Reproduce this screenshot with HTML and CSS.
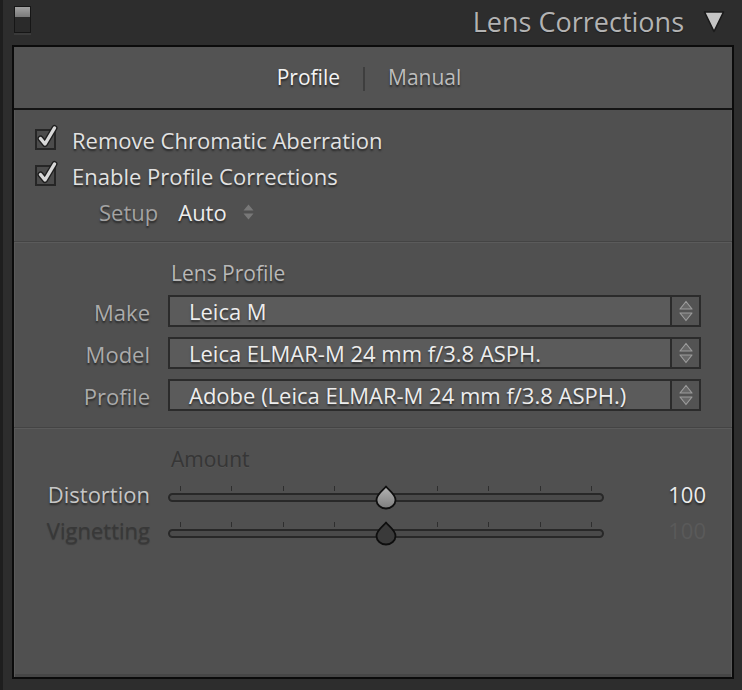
FILE: index.html
```html
<!DOCTYPE html>
<html>
<head>
<meta charset="utf-8">
<link rel="stylesheet" href="styles.css">
</head>
<body>
<div class="app">
  <header class="hdr">
    <div class="switch"><span class="sw-top"></span></div>
    <div class="title">Lens Corrections</div>
    <svg class="tri" width="22" height="23" viewBox="0 0 22 23"><path d="M1.5 2 H20.5 L11 21.5 Z" fill="#c4c4c4" stroke="#1a1a1a" stroke-width="1.6" stroke-linejoin="round"/></svg>
  </header>
  <section class="panel">
    <nav class="tabs">
      <span class="tab active">Profile</span>
      <span class="tab-sep"></span>
      <span class="tab">Manual</span>
    </nav>
    <div class="sec sec1">
      <div class="chk">
        <svg class="box" width="26" height="26" viewBox="0 0 26 26"><rect x="1" y="6" width="19" height="19" fill="#4c4c4c" stroke="#262626" stroke-width="2"/><path d="M5.5 14.5 L10 20 L19.5 4" fill="none" stroke="#1e1e1e" stroke-width="6" stroke-linecap="round" stroke-linejoin="round"/><path d="M5.5 14.5 L10 20 L19.5 4" fill="none" stroke="#d8d8d8" stroke-width="3.4" stroke-linecap="round" stroke-linejoin="round"/></svg>
        <span>Remove Chromatic Aberration</span>
      </div>
      <div class="chk">
        <svg class="box" width="26" height="26" viewBox="0 0 26 26"><rect x="1" y="6" width="19" height="19" fill="#4c4c4c" stroke="#262626" stroke-width="2"/><path d="M5.5 14.5 L10 20 L19.5 4" fill="none" stroke="#1e1e1e" stroke-width="6" stroke-linecap="round" stroke-linejoin="round"/><path d="M5.5 14.5 L10 20 L19.5 4" fill="none" stroke="#d8d8d8" stroke-width="3.4" stroke-linecap="round" stroke-linejoin="round"/></svg>
        <span>Enable Profile Corrections</span>
      </div>
      <div class="setup">
        <span class="setup-lbl">Setup</span>
        <span class="setup-val">Auto</span>
        <svg class="updown" width="11" height="16" viewBox="0 0 11 16"><path d="M5.5 0.5 L10.5 6.5 H0.5 Z M0.5 9.5 H10.5 L5.5 15.5 Z" fill="#787878"/></svg>
      </div>
    </div>
    <div class="sec sec2">
      <div class="heading">Lens Profile</div>
      <div class="sel-grid">
        <span class="lbl">Make</span>
        <div class="select"><span class="sel-text">Leica M</span><span class="sel-arrows"><svg width="16" height="22" viewBox="0 0 16 22"><path d="M8 1.5 L14 9 H2 Z M2 13 H14 L8 20.5 Z" fill="#686868" stroke="#9c9c9c" stroke-width="1.2" stroke-linejoin="round"/></svg></span></div>
        <span class="lbl">Model</span>
        <div class="select"><span class="sel-text">Leica ELMAR-M 24 mm f/3.8 ASPH.</span><span class="sel-arrows"><svg width="16" height="22" viewBox="0 0 16 22"><path d="M8 1.5 L14 9 H2 Z M2 13 H14 L8 20.5 Z" fill="#686868" stroke="#9c9c9c" stroke-width="1.2" stroke-linejoin="round"/></svg></span></div>
        <span class="lbl">Profile</span>
        <div class="select"><span class="sel-text">Adobe (Leica ELMAR-M 24 mm f/3.8 ASPH.)</span><span class="sel-arrows"><svg width="16" height="22" viewBox="0 0 16 22"><path d="M8 1.5 L14 9 H2 Z M2 13 H14 L8 20.5 Z" fill="#686868" stroke="#9c9c9c" stroke-width="1.2" stroke-linejoin="round"/></svg></span></div>
      </div>
    </div>
    <div class="sec sec3">
      <div class="heading dim">Amount</div>
      <div class="sl-grid">
        <span class="lbl bright">Distortion</span>
        <div class="slider">
          <div class="ticks"><i></i><i></i><i></i><i></i><i></i><i></i><i></i><i></i><i></i></div>
          <div class="track">
            <svg class="thumb" width="24" height="25" viewBox="0 0 24 25"><defs><linearGradient id="g1" x1="0" y1="0" x2="0" y2="1"><stop offset="0" stop-color="#b4b4b4"/><stop offset="1" stop-color="#7e7e7e"/></linearGradient></defs><path d="M12 1.5 C14 4.5 21.5 9 21.5 15 A9.5 8.5 0 0 1 2.5 15 C2.5 9 10 4.5 12 1.5 Z" fill="url(#g1)" stroke="#0e0e0e" stroke-width="1.8" stroke-linejoin="round"/></svg>
          </div>
        </div>
        <span class="val">100</span>
        <span class="lbl dim">Vignetting</span>
        <div class="slider">
          <div class="ticks"><i></i><i></i><i></i><i></i><i></i><i></i><i></i><i></i><i></i></div>
          <div class="track">
            <svg class="thumb" width="24" height="25" viewBox="0 0 24 25"><path d="M12 1.5 C14 4.5 21.5 9 21.5 15 A9.5 8.5 0 0 1 2.5 15 C2.5 9 10 4.5 12 1.5 Z" fill="#3a3a3a" stroke="#0e0e0e" stroke-width="1.8" stroke-linejoin="round"/></svg>
          </div>
        </div>
        <span class="val dimval">100</span>
      </div>
    </div>
  </section>
</div>
</body>
</html>
```
FILE: styles.css
```css
html, body {
  margin: 0;
  padding: 0;
}
body {
  background: #2d2d2d;
  font-family: "Open Sans", "Liberation Sans", sans-serif;
  width: 742px;
  height: 690px;
  overflow: hidden;
}
.app {
  height: 690px;
  box-sizing: border-box;
  border-left: 3px solid #1e1e1e;
  padding-left: 9px;
}
.hdr {
  height: 45px;
  display: flex;
  align-items: center;
  padding-right: 17px;
}
.switch {
  align-self: flex-start;
  margin-top: 6px;
  margin-left: 2px;
  width: 17px;
  height: 27px;
  box-sizing: border-box;
  border: 1px solid #161616;
  background: #2a2a2a;
  box-shadow: 0 2px 0 #3a3a3a;
  display: flex;
  flex-direction: column;
}
.sw-top {
  height: 10px;
  background: linear-gradient(#a2a2a2, #7a7a7a);
}
.title {
  margin-left: auto;
  font-size: 27px;
  color: #b3b3b3;
  line-height: 45px;
  margin-top: -2px;
  text-shadow: 0 1px 1px rgba(0,0,0,0.4);
}
.tri {
  margin-left: 19px;
  margin-top: -2px;
}
.panel {
  width: 722px;
  height: 634px;
  box-sizing: border-box;
  border: 2px solid #0b0b0b;
  background: #505050;
  display: flex;
  flex-direction: column;
  box-shadow: inset 1px 0 0 #5a5a5a, inset -1px 0 0 #5a5a5a, inset 0 -3px 0 #464646;
}
.tabs {
  height: 61px;
  flex: none;
  border-bottom: 2px solid #141414;
  background: #535353;
  display: flex;
  align-items: center;
  justify-content: center;
  gap: 23px;
  padding-right: 8px;
  font-size: 21px;
  color: #bdbdbd;
  text-shadow: 0 2px 2px rgba(0,0,0,0.55);
}
.tab {
  margin-top: -2px;
}
.tab.active {
  color: #f4f4f4;
}
.tab-sep {
  width: 2px;
  height: 24px;
  background: #3e3e3e;
  margin-top: 2px;
}
.sec {
  border-bottom: 1px solid #444444;
  flex: none;
}
.sec + .sec {
  border-top: 1px solid #5b5b5b;
}
.sec3 {
  border-bottom: none;
  flex: 1;
}
.sec1 {
  padding: 12px 0 11px 21px;
  font-size: 22px;
  color: #e2e2e2;
  text-shadow: 0 2px 2px rgba(0,0,0,0.55);
}
.chk {
  height: 36px;
  display: flex;
  align-items: center;
  gap: 11px;
}
.chk .box {
  margin-top: -6px;
}
.setup {
  height: 36px;
  display: flex;
  align-items: center;
  padding-left: 64px;
}
.setup-lbl {
  color: #a3a3a3;
}
.setup-val {
  margin-left: 20px;
  color: #ececec;
}
.updown {
  margin-left: 16px;
}
.sec2 {
  padding: 15px 0 16px 0;
  font-size: 22px;
}
.heading {
  padding-left: 157px;
  height: 30px;
  line-height: 30px;
  font-size: 21px;
  color: #b8b8b8;
  text-shadow: 0 2px 2px rgba(0,0,0,0.5);
}
.heading.dim {
  color: #363636;
  text-shadow: 0 1px 0 rgba(255,255,255,0.04);
}
.sel-grid {
  margin-top: 7px;
  display: grid;
  grid-template-columns: 136px 533px;
  column-gap: 18px;
  row-gap: 10px;
  align-items: center;
}
.lbl {
  text-align: right;
  color: #ababab;
  font-size: 22px;
  text-shadow: 0 2px 2px rgba(0,0,0,0.5);
}
.sel-grid .lbl {
  margin-top: 2px;
}
.select {
  height: 32px;
  box-sizing: border-box;
  border: 2px solid #2b2b2b;
  display: flex;
}
.sel-text {
  flex: 1;
  background: #5b5b5b;
  padding-left: 19px;
  line-height: 28px;
  color: #ededed;
  text-shadow: 0 2px 2px rgba(0,0,0,0.5);
  white-space: nowrap;
}
.sel-arrows {
  width: 27px;
  flex: none;
  border-left: 2px solid #2b2b2b;
  background: #535353;
  display: flex;
  align-items: center;
  justify-content: center;
}
.sec3 {
  padding-top: 15px;
}
.sl-grid {
  margin-top: 5px;
  display: grid;
  grid-template-columns: 136px 436px 84px;
  column-gap: 18px;
  grid-auto-rows: 36px;
  align-items: center;
}
.sl-grid .lbl,
.sl-grid .val {
  margin-top: -7px;
}
.lbl.bright {
  color: #c6c6c6;
}
.lbl.dim {
  color: #383838;
  text-shadow: 0 1px 1px rgba(0,0,0,0.25);
}
.slider {
  align-self: stretch;
  display: flex;
  flex-direction: column;
  padding-top: 7px;
}
.ticks {
  height: 5px;
  display: flex;
  justify-content: space-between;
  padding: 0 12px;
}
.ticks i {
  width: 1px;
  height: 5px;
  background: #2e2e2e;
}
.track {
  position: relative;
  margin-top: 2px;
  height: 9px;
  box-sizing: border-box;
  border: 2px solid #282828;
  border-radius: 5px;
  background: #4a4a4a;
}
.thumb {
  position: absolute;
  left: 50%;
  top: -10px;
  transform: translateX(-50%);
}
.val {
  text-align: right;
  font-size: 22px;
  color: #ececec;
  text-shadow: 0 2px 2px rgba(0,0,0,0.5);
}
.val.dimval {
  color: #5a5a5a;
  text-shadow: none;
}
```
